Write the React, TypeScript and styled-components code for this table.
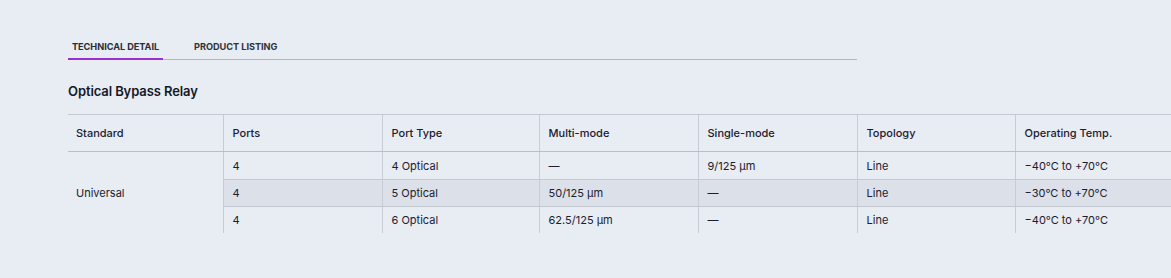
import React, { FunctionComponent, useState } from 'react';
import styled, { createGlobalStyle } from 'styled-components';

const GlobalStyle = createGlobalStyle`
  html, body {
    margin: 0;
    padding: 0;
    overflow: hidden;
    background: #e8ecf3;
  }
  body {
    font-family: Inter, 'Noto Sans', 'Liberation Sans', sans-serif;
    color: #1b2030;
  }
`;

const tabs = ['Technical Detail', 'Product Listing'];

const columns = [
  { label: 'Standard', width: 155 },
  { label: 'Ports', width: 159 },
  { label: 'Port Type', width: 157 },
  { label: 'Multi-mode', width: 159 },
  { label: 'Single-mode', width: 159 },
  { label: 'Topology', width: 158 },
  { label: 'Operating Temp.', width: 159 },
];

const tableWidth = columns.reduce((sum, col) => sum + col.width, 0);

const rows = [
  ['4', '4 Optical', '—', '9/125 µm', 'Line', '−40°C to +70°C'],
  ['4', '5 Optical', '50/125 µm', '—', 'Line', '−30°C to +70°C'],
  ['4', '6 Optical', '62.5/125 µm', '—', 'Line', '−40°C to +70°C'],
];

const Page = styled.div`
  padding: 41px 0 0 68px;
  height: 278px;
  box-sizing: border-box;
`;

const TabBar = styled.div`
  display: flex;
  gap: 27px;
  width: 789px;
  border-bottom: 1px solid #b4b8c1;
`;

type TabProps = {
  active: boolean;
};

const Tab = styled.button<TabProps>`
  all: unset;
  cursor: pointer;
  padding: 0 4px 5px;
  font-size: 9.2px;
  font-weight: 700;
  text-transform: uppercase;
  letter-spacing: -0.05px;
  color: ${({ active }) => (active ? '#2a2e38' : '#2f333d')};
  border-bottom: 2px solid ${({ active }) => (active ? '#9b30d0' : 'transparent')};
  margin-bottom: -1px;
  line-height: 12px;
`;

const Title = styled.h2`
  margin: 22px 0 14px;
  font-size: 13px;
  font-weight: 600;
  line-height: 18px;
  letter-spacing: -0.1px;
  color: #141927;
`;

type TableProps = {
  width: number;
};

const Table = styled.table<TableProps>`
  width: ${({ width }) => width}px;
  min-width: ${({ width }) => width}px;
  border-collapse: collapse;
  table-layout: fixed;
  font-size: 11px;
  line-height: 14px;
`;

type CellProps = {
  width?: number;
};

const HeadCell = styled.th<CellProps>`
  width: ${({ width }) => (width ? `${width}px` : 'auto')};
  height: 37px;
  box-sizing: border-box;
  padding: 0 9px;
  text-align: left;
  font-weight: 500;
  border-top: 1px solid #c3c8d1;
  border-bottom: 1px solid #b9bec8;
  border-left: 1px solid #c8ccd4;
  &:first-child {
    border-left: none;
    padding-left: 8px;
  }
`;

type RowProps = {
  shaded: boolean;
};

const BodyRow = styled.tr<RowProps>`
  td {
    background: ${({ shaded }) => (shaded ? '#dce1e9' : 'transparent')};
  }
  &:first-child td {
    height: 27px;
  }
  &:not(:last-child) td {
    border-bottom: 1px solid #c3c8d1;
  }
`;

const Cell = styled.td`
  height: 26px;
  padding: 0 9px;
  border-left: 1px solid #c8ccd4;
`;

const GroupCell = styled.td`
  padding: 0 8px;
  vertical-align: middle;
  background: transparent !important;
  border-bottom: none !important;
`;

const App: FunctionComponent = () => {
  const [active, setActive] = useState(0);
  return (
    <>
      <GlobalStyle />
      <Page>
        <TabBar>
          {tabs.map((tab, i) => (
            <Tab key={tab} active={i === active} onClick={() => setActive(i)}>
              {tab}
            </Tab>
          ))}
        </TabBar>
        <Title>Optical Bypass Relay</Title>
        <Table width={tableWidth}>
          <thead>
            <tr>
              {columns.map((col) => (
                <HeadCell key={col.label} width={col.width}>
                  {col.label}
                </HeadCell>
              ))}
            </tr>
          </thead>
          <tbody>
            {rows.map((row, i) => (
              <BodyRow key={i} shaded={i === 1}>
                {i === 0 && <GroupCell rowSpan={rows.length}>Universal</GroupCell>}
                {row.map((value, j) => (
                  <Cell key={j}>{value}</Cell>
                ))}
              </BodyRow>
            ))}
          </tbody>
        </Table>
      </Page>
    </>
  );
};

export default App;
